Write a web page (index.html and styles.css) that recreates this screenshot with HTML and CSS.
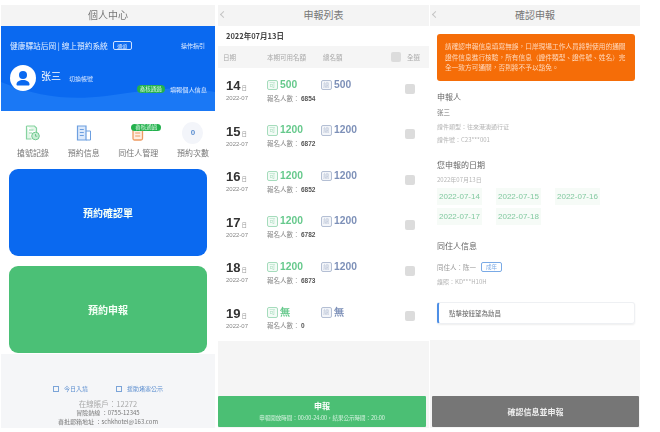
FILE: index.html
```html
<!DOCTYPE html>
<html lang="zh-Hant">
<head>
<meta charset="utf-8">
<title>申報流程</title>
<link rel="stylesheet" href="styles.css">
</head>
<body>
<div class="screens">
  <section class="panel panel-home">
    <header class="title">個人中心</header>
    <div class="hero">
      <svg class="hero-wave" viewBox="0 0 214 85" preserveAspectRatio="none"><path d="M0 56C40 72 70 74 105 70S170 58 214 66V85H0Z" fill="#1a78f5"/></svg>
      <div class="hero-top">
        <span class="hero-name">健康驛站后岡 | 線上預約系統</span>
        <span class="hero-tag">通道</span>
        <span class="hero-guide">操作指引</span>
      </div>
      <div class="hero-user">
        <span class="avatar">
          <svg viewBox="0 0 26 26" width="26" height="26"><circle cx="13" cy="13" r="13" fill="#fff"/><circle cx="13" cy="10" r="4" fill="#0a69f0"/><path d="M6.500 19.500c0-3 3-4.500 6.500-4.500s6.500 1.500 6.500 4.500c0 .8-.5 1-1 1H7.500c-.5 0-1-.2-1-1z" fill="#0a69f0"/></svg>
        </span>
        <span class="user-name">张三</span>
        <span class="user-switch">切換帳號</span>
      </div>
      <div class="hero-status">
        <span class="badge">審核通過</span>
        <span class="status-link">填報個人信息</span>
      </div>
    </div>
    <nav class="shortcuts">
      <div class="shortcut">
        <svg class="shortcut-icon" viewBox="0 0 16 16"><path d="M1.500 1h8l2 2v4M1.500 1v13h5" fill="#e4f6e9" stroke="#86d3a0" stroke-width="1.200"/><path d="M4 5h4.500M4 8h3" stroke="#86d3a0" stroke-width="1"/><circle cx="10.500" cy="11" r="3.800" fill="#c9eed5" stroke="#6fc98f" stroke-width="1"/><path d="M10.500 9v2.200h1.800" fill="none" stroke="#5dbd80" stroke-width=".8"/></svg>
        <span>搶號記錄</span>
      </div>
      <div class="shortcut">
        <svg class="shortcut-icon" viewBox="0 0 16 16"><path d="M1.500 1h8.500v14H1.500z" fill="#dce9fb" stroke="#6d9fe0" stroke-width="1.200"/><path d="M10 6h4.500v9H10M3.800 4.500h4M3.800 7.500h4M3.800 10.500h4" fill="none" stroke="#6d9fe0" stroke-width="1"/></svg>
        <span>預約信息</span>
      </div>
      <div class="shortcut">
        <svg class="shortcut-icon" viewBox="0 0 16 16"><rect x="3" y="3.500" width="9.500" height="11.500" rx="1.500" fill="#fdeee2" stroke="#ee9a62" stroke-width="1.300"/><path d="M5.200 8h5M5.200 11h5" stroke="#ee9a62" stroke-width="1"/></svg>
        <span class="badge badge-float">審核通過</span>
        <span>同住人管理</span>
      </div>
      <div class="shortcut">
        <span class="count">0</span>
        <span>預約次數</span>
      </div>
    </nav>
    <a class="action action-blue">預約確認單</a>
    <a class="action action-green">預約申報</a>
    <footer class="home-foot">
      <div class="foot-links">
        <span class="foot-link"><i class="foot-icon"></i>今日入境</span>
        <span class="foot-link"><i class="foot-icon"></i>援助堵塞公示</span>
      </div>
      <div class="foot-count">在線賬戶：12272</div>
      <div class="foot-line">冒險熱線 ：0755-12345</div>
      <div class="foot-line">審批郵箱地址 ：schkhotel@163.com</div>
    </footer>
  </section>

  <section class="panel panel-list">
    <header class="title"><span class="back"></span>申報列表</header>
    <div class="list-date">2022年07月13日</div>
    <div class="list-head">
      <span class="col-day">日期</span>
      <span class="col-free">本期可用名額</span>
      <span class="col-total">總名額</span>
      <span class="check check-all"></span>
      <span class="col-all">全選</span>
    </div>
    <div class="list-body">
      <div class="row">
        <div class="day"><div class="day-num"><b>14</b><small>日</small></div><div class="day-month">2022-07</div></div>
        <div class="row-info">
          <div class="quota"><span class="quota-free"><i class="mark mark-green">可</i>500</span><span class="quota-total"><i class="mark mark-blue">總</i>500</span></div>
          <div class="applied">報名人數： <b>6854</b></div>
        </div>
        <span class="check"></span>
      </div>
      <div class="row">
        <div class="day"><div class="day-num"><b>15</b><small>日</small></div><div class="day-month">2022-07</div></div>
        <div class="row-info">
          <div class="quota"><span class="quota-free"><i class="mark mark-green">可</i>1200</span><span class="quota-total"><i class="mark mark-blue">總</i>1200</span></div>
          <div class="applied">報名人數： <b>6872</b></div>
        </div>
        <span class="check"></span>
      </div>
      <div class="row">
        <div class="day"><div class="day-num"><b>16</b><small>日</small></div><div class="day-month">2022-07</div></div>
        <div class="row-info">
          <div class="quota"><span class="quota-free"><i class="mark mark-green">可</i>1200</span><span class="quota-total"><i class="mark mark-blue">總</i>1200</span></div>
          <div class="applied">報名人數： <b>6852</b></div>
        </div>
        <span class="check"></span>
      </div>
      <div class="row">
        <div class="day"><div class="day-num"><b>17</b><small>日</small></div><div class="day-month">2022-07</div></div>
        <div class="row-info">
          <div class="quota"><span class="quota-free"><i class="mark mark-green">可</i>1200</span><span class="quota-total"><i class="mark mark-blue">總</i>1200</span></div>
          <div class="applied">報名人數： <b>6782</b></div>
        </div>
        <span class="check"></span>
      </div>
      <div class="row">
        <div class="day"><div class="day-num"><b>18</b><small>日</small></div><div class="day-month">2022-07</div></div>
        <div class="row-info">
          <div class="quota"><span class="quota-free"><i class="mark mark-green">可</i>1200</span><span class="quota-total"><i class="mark mark-blue">總</i>1200</span></div>
          <div class="applied">報名人數： <b>6873</b></div>
        </div>
        <span class="check"></span>
      </div>
      <div class="row">
        <div class="day"><div class="day-num"><b>19</b><small>日</small></div><div class="day-month">2022-07</div></div>
        <div class="row-info">
          <div class="quota"><span class="quota-free"><i class="mark mark-green">可</i>無</span><span class="quota-total"><i class="mark mark-blue">總</i>無</span></div>
          <div class="applied">報名人數： <b>0</b></div>
        </div>
        <span class="check"></span>
      </div>
    </div>
    <a class="submit submit-green">
      <span class="submit-main">申報</span>
      <span class="submit-sub">申報開放時間：00:00-24:00，結果公示時間：20:00</span>
    </a>
  </section>

  <section class="panel panel-confirm">
    <header class="title"><span class="back"></span>確認申報</header>
    <div class="confirm-body">
      <div class="notice">請確認申報信息填寫無誤，口岸現場工作人員將對使用的通關證件信息進行核驗，所有信息（證件類型、證件號、姓名）完全一致方可通關，否則將不予以豁免。</div>
      <h2 class="section-title">申報人</h2>
      <div class="person">张三</div>
      <div class="meta meta-first">證件類型：往來港澳通行证</div>
      <div class="meta">證件號：C23***001</div>
      <h2 class="section-title section-dates">您申報的日期</h2>
      <div class="meta meta-date">2022年07月13日</div>
      <div class="dates">
        <span class="date">2022-07-14</span>
        <span class="date">2022-07-15</span>
        <span class="date">2022-07-16</span>
        <span class="date">2022-07-17</span>
        <span class="date">2022-07-18</span>
      </div>
      <h2 class="section-title section-mate">同住人信息</h2>
      <div class="mate"><span>同住人：陈一</span><span class="mate-tag">成年</span></div>
      <div class="meta meta-date">護照：KD***H10H</div>
      <div class="tip">點擊按鈕望為勳昌</div>
    </div>
    <a class="submit submit-grey">確認信息並申報</a>
  </section>
</div>
</body>
</html>
```
FILE: styles.css
```css
* { box-sizing: border-box; }
html, body { margin: 0; padding: 0; background: #fff; }
body { width: 660px; height: 432px; overflow: hidden; font-family: "Noto Sans CJK TC", "Liberation Sans", sans-serif; color: #555; }
.screens { display: flex; align-items: stretch; height: 423px; margin-top: 5px; padding-left: 1px; filter: blur(0.35px); }
.panel { display: flex; flex-direction: column; background: #f5f5f5; }
.panel-home { width: 214px; margin-right: 3px; background: #fff; }
.panel-list { width: 211px; margin-right: 1px; }
.panel-confirm { width: 210px; }
.title { position: relative; flex: none; height: 21px; line-height: 20px; text-align: center; font-size: 10px; color: #777; background: #f4f4f4; }
.back { position: absolute; left: 3px; top: 7px; width: 5px; height: 5px; border-left: 1px solid #c4c4c4; border-bottom: 1px solid #c4c4c4; transform: rotate(45deg); }

.hero { position: relative; flex: none; height: 85px; background: #0a69f0; color: #fff; padding: 12px 10px 0 9px; overflow: hidden; }
.hero-wave { position: absolute; left: 0; top: 0; width: 100%; height: 100%; }
.hero-top, .hero-user, .hero-status { position: relative; display: flex; align-items: center; }
.hero-top { height: 14px; font-size: 7.700px; color: #e6f0ff; }
.hero-tag { margin-left: 5px; padding: 0 3.500px; border: 1px solid #cfe2ff; border-radius: 2px; font-size: 5px; line-height: 7px; }
.hero-guide { margin-left: auto; font-size: 6px; }
.hero-user { margin-top: 13px; height: 26px; }
.avatar { display: flex; width: 26px; height: 26px; }
.user-name { margin-left: 5px; font-size: 10px; line-height: 20px; margin-top: -4px; }
.user-switch { margin-left: 8px; font-size: 6px; color: #d6e6ff; }
.hero-status { justify-content: flex-end; margin-top: -7px; margin-right: -2px; height: 10px; font-size: 6.200px; gap: 5px; color: #dbe9ff; }
.badge { display: inline-block; height: 7px; padding: 0 3px; line-height: 7px; font-size: 5.500px; color: #d9f7e2; background: #23b14d; border-radius: 4px; }
.hero-status .badge { height: 8px; line-height: 8px; }

.shortcuts { flex: none; display: flex; justify-content: space-between; height: 58px; padding: 11px 6px 0 16px; }
.shortcut { position: relative; display: flex; flex-direction: column; align-items: center; font-size: 8px; color: #777; line-height: 12px; gap: 3px; }
.shortcut-icon { width: 16px; height: 16px; margin: 3px 0; }
.count { width: 21px; height: 22px; border-radius: 50%; background: #f3f5fa; color: #5d8fd0; font-family: "Liberation Sans", sans-serif; font-weight: 700; font-size: 8px; line-height: 22px; text-align: center; }
.badge-float { position: absolute; left: 13px; top: 2px; height: 7px; padding: 0 4px; line-height: 7px; border-radius: 4px; font-size: 5.500px; white-space: nowrap; }
.action { flex: none; display: flex; align-items: center; justify-content: center; width: 198px; height: 87px; margin-left: 8px; border-radius: 9px; color: #f4fff6; font-size: 10px; font-weight: 700; }
.action-blue { background: #0a69f0; }
.action-green { background: #4bc076; margin-top: 10px; }
.home-foot { flex: 1; display: flex; flex-direction: column; align-items: center; margin-top: 1px; padding-top: 29px; background: #f5f6f8; font-size: 6px; line-height: 8.500px; color: #777; }
.foot-links { display: flex; gap: 28px; color: #5d8fd0; font-size: 6px; height: 12px; }
.foot-link { display: flex; align-items: center; gap: 5px; }
.foot-icon { width: 6px; height: 6px; border: 1px solid #7ba4d8; }
.foot-count { margin-top: 3px; font-size: 7.500px; color: #aaa; line-height: 11px; }

.list-date { flex: none; height: 20px; padding-left: 8px; line-height: 20px; background: #fff; font-size: 7.500px; font-weight: 700; color: #444; }
.list-head { flex: none; display: flex; align-items: center; height: 22px; padding-left: 5px; font-size: 6.500px; color: #aaa; }
.col-day { width: 44px; }
.col-free { width: 56px; }
.col-total { width: 68px; }
.col-all { margin-left: 6px; }
.check { flex: none; display: block; width: 10px; height: 10px; border-radius: 2px; background: #dcdcdc; }
.list-body { flex: none; background: #fff; }
.row { display: flex; align-items: center; height: 45.500px; padding: 0 14px 0 8px; }
.row .check { margin-top: -4px; }
.day { width: 41px; }
.day-num { display: flex; align-items: baseline; line-height: 13px; gap: 1px; }
.day-num b { font-family: "Liberation Sans", sans-serif; font-size: 13px; color: #333; }
.day-num small { font-size: 5.500px; color: #999; }
.day-month { font-family: "Liberation Sans", sans-serif; font-size: 6px; line-height: 7px; color: #888; }
.row-info { flex: 1; }
.quota { display: flex; line-height: 12px; font-family: "Liberation Sans", sans-serif; font-size: 10.300px; font-weight: 700; }
.quota-free { display: flex; align-items: center; gap: 2.500px; width: 54px; color: #66c98c; }
.quota-total { display: flex; align-items: center; gap: 2.500px; color: #7d90b8; }
.mark { display: block; width: 10.500px; height: 10.500px; border: 1px solid; border-radius: 2px; font-style: normal; font-weight: 400; font-size: 6px; line-height: 8px; text-align: center; font-family: "Noto Sans CJK TC", sans-serif; }
.mark-green { color: #a5dcbc; background: #f3fbf6; }
.mark-blue { color: #b4bfd4; background: #f3f5f9; }
.applied { margin-top: 3px; font-size: 6.500px; line-height: 9px; color: #888; }
.applied b { color: #555; font-family: "Liberation Sans", sans-serif; }
.submit { flex: none; display: flex; flex-direction: column; align-items: center; justify-content: center; margin-top: auto; color: #fff; border-radius: 1px; }
.submit-green { width: 208px; height: 31px; margin-bottom: 1px; background: #4bbf74; gap: 3px; }
.submit-main { font-size: 8px; line-height: 10px; font-weight: 700; }
.submit-sub { font-size: 5.500px; line-height: 8px; color: #d8f3e2; }
.submit-grey { width: 207px; height: 31px; margin-left: 2px; margin-bottom: 1px; background: #767676; font-size: 8px; font-weight: 700; color: #eee; }

.confirm-body { flex: none; background: #fff; padding: 8px 5px 16px 7px; }
.notice { height: 47px; padding: 7px 8px; border-radius: 3px; background: #f56d08; color: #ffd9bd; font-size: 6.700px; line-height: 10.500px; }
.section-title { margin: 10px 0 0; font-size: 8px; line-height: 12px; font-weight: 400; color: #666; }
.section-dates { margin-top: 14px; }
.section-mate { margin-top: 15px; }
.person { margin-top: 4px; font-size: 6.500px; line-height: 10px; color: #777; }
.meta { margin-top: 3px; font-size: 6px; line-height: 10px; color: #b5b5b5; }
.meta-first { margin-top: 5px; }
.meta-date { margin-top: 4px; }
.dates { display: flex; flex-wrap: wrap; gap: 3px 14px; margin-top: 3px; }
.date { width: 45px; height: 17px; padding: 0 2px; background: #f6fbf7; font-family: "Liberation Sans", sans-serif; font-size: 8px; line-height: 17px; color: #82c9a0; white-space: nowrap; }
.mate { display: flex; align-items: center; gap: 5px; height: 12px; margin-top: 9px; font-size: 6.500px; color: #999; }
.mate-tag { padding: 0 4px; border: 1px solid #7aaae6; border-radius: 2px; font-size: 5.500px; line-height: 8px; color: #7aaae6; }
.tip { height: 22px; margin-top: 15px; padding-left: 10px; line-height: 21px; border: 1px solid #eef0f3; border-left: 2px solid #4e8fe6; border-radius: 3px; box-shadow: 0 1px 2px #eee; font-size: 6.500px; color: #666; }
```
